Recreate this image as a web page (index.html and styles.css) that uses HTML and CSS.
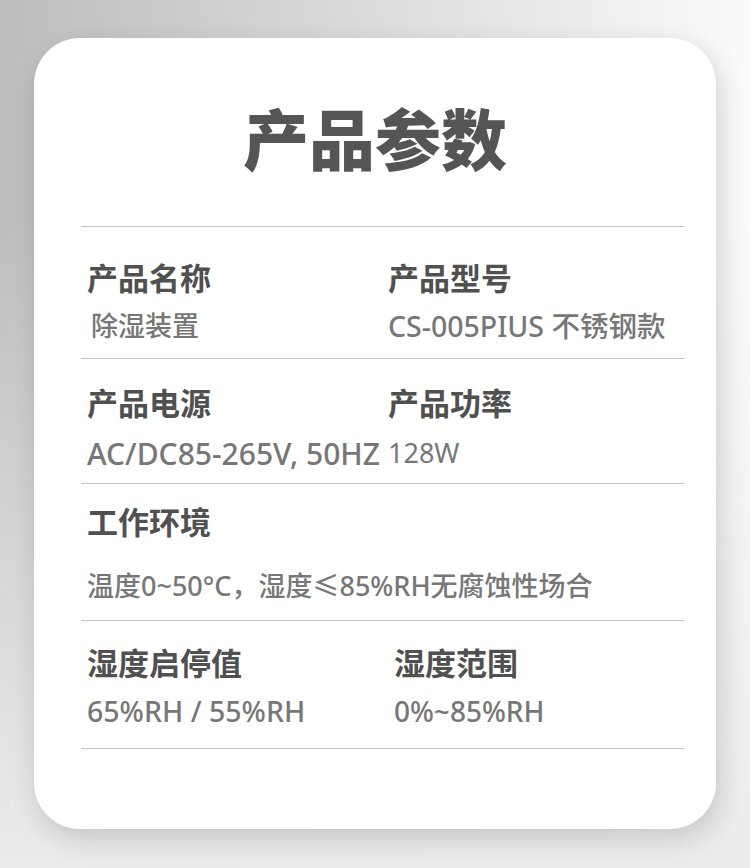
FILE: index.html
```html
<!DOCTYPE html>
<html lang="zh-CN">
<head>
    <meta charset="UTF-8">
    <meta name="viewport" content="width=device-width, initial-scale=1.0">
    <title>产品参数</title>
    <link rel="stylesheet" href="styles.css">
</head>
<body>
    <div class="card">
        <h1 class="title">产品参数</h1>

        <div class="specs">
            <div class="spec-row row-1">
                <div class="spec">
                    <div class="label">产品名称</div>
                    <div class="value value-indent">除湿装置</div>
                </div>
                <div class="spec">
                    <div class="label">产品型号</div>
                    <div class="value size-m">CS-005PIUS 不锈钢款</div>
                </div>
            </div>

            <div class="spec-row row-2">
                <div class="spec">
                    <div class="label">产品电源</div>
                    <div class="value size-l">AC/DC85-265V, 50HZ</div>
                </div>
                <div class="spec">
                    <div class="label">产品功率</div>
                    <div class="value thin">128W</div>
                </div>
            </div>

            <div class="spec-row row-3 single">
                <div class="spec">
                    <div class="label">工作环境</div>
                    <div class="value">温度0~50°C，湿度≤85%RH无腐蚀性场合</div>
                </div>
            </div>

            <div class="spec-row row-4 wide">
                <div class="spec">
                    <div class="label">湿度启停值</div>
                    <div class="value size-m">65%RH / 55%RH</div>
                </div>
                <div class="spec">
                    <div class="label">湿度范围</div>
                    <div class="value size-s">0%~85%RH</div>
                </div>
            </div>
        </div>
    </div>
</body>
</html>
```

FILE: styles.css
```css
/* General Styles */
* {
    margin: 0;
    padding: 0;
    box-sizing: border-box;
}

html, body {
    height: 100%;
}

body {
    font-family: "Noto Sans CJK SC", "Noto Sans", sans-serif;
    background:
        linear-gradient(to bottom, rgba(236, 236, 236, 0) 25%, rgba(236, 236, 236, 1) 100%),
        linear-gradient(to right, #bdbdbd, #fbfbfb);
    padding: 38px 34px 39px;
}

/* Card */
.card {
    height: 791px;
    background-color: #fff;
    border-radius: 46px;
    box-shadow: 4px 10px 28px rgba(0, 0, 0, 0.16);
    padding-top: 65px;
}

.title {
    font-size: 66px;
    line-height: 1;
    font-weight: 900;
    color: #555;
    text-align: center;
    margin-bottom: 57px;
}

/* Spec rows */
.specs {
    margin: 0 32px 0 47px;
    border-top: 1px solid #c4c4c4;
}

.spec-row {
    display: grid;
    grid-template-columns: 301px 1fr;
    padding-left: 6px;
    border-bottom: 1px solid #c4c4c4;
}

.spec-row.single {
    grid-template-columns: 1fr;
}

.spec-row.wide {
    grid-template-columns: 307px 1fr;
}

.label {
    font-size: 31px;
    line-height: 1;
    font-weight: 700;
    color: #505050;
}

.value {
    font-family: "Noto Sans", "Noto Sans CJK SC", sans-serif;
    font-size: 27px;
    line-height: 1;
    font-weight: 500;
    color: #777;
    white-space: nowrap;
}

.value.size-s { font-size: 28px; }
.value.size-m { font-size: 28.5px; }
.value.size-l { font-size: 30px; }
.value.thin { font-weight: 400; }

.value-indent {
    padding-left: 4px;
}

.row-1 { padding-top: 34px; padding-bottom: 17.5px; }
.row-1 .label { margin-bottom: 20px; }

.row-2 { padding-top: 27px; padding-bottom: 14px; }
.row-2 .label { margin-bottom: 22px; }

.row-3 { padding-top: 21px; padding-bottom: 21px; }
.row-3 .label { margin-bottom: 36px; }

.row-4 { padding-top: 25px; padding-bottom: 22.5px; }
.row-4 .label { margin-bottom: 20px; }
```
